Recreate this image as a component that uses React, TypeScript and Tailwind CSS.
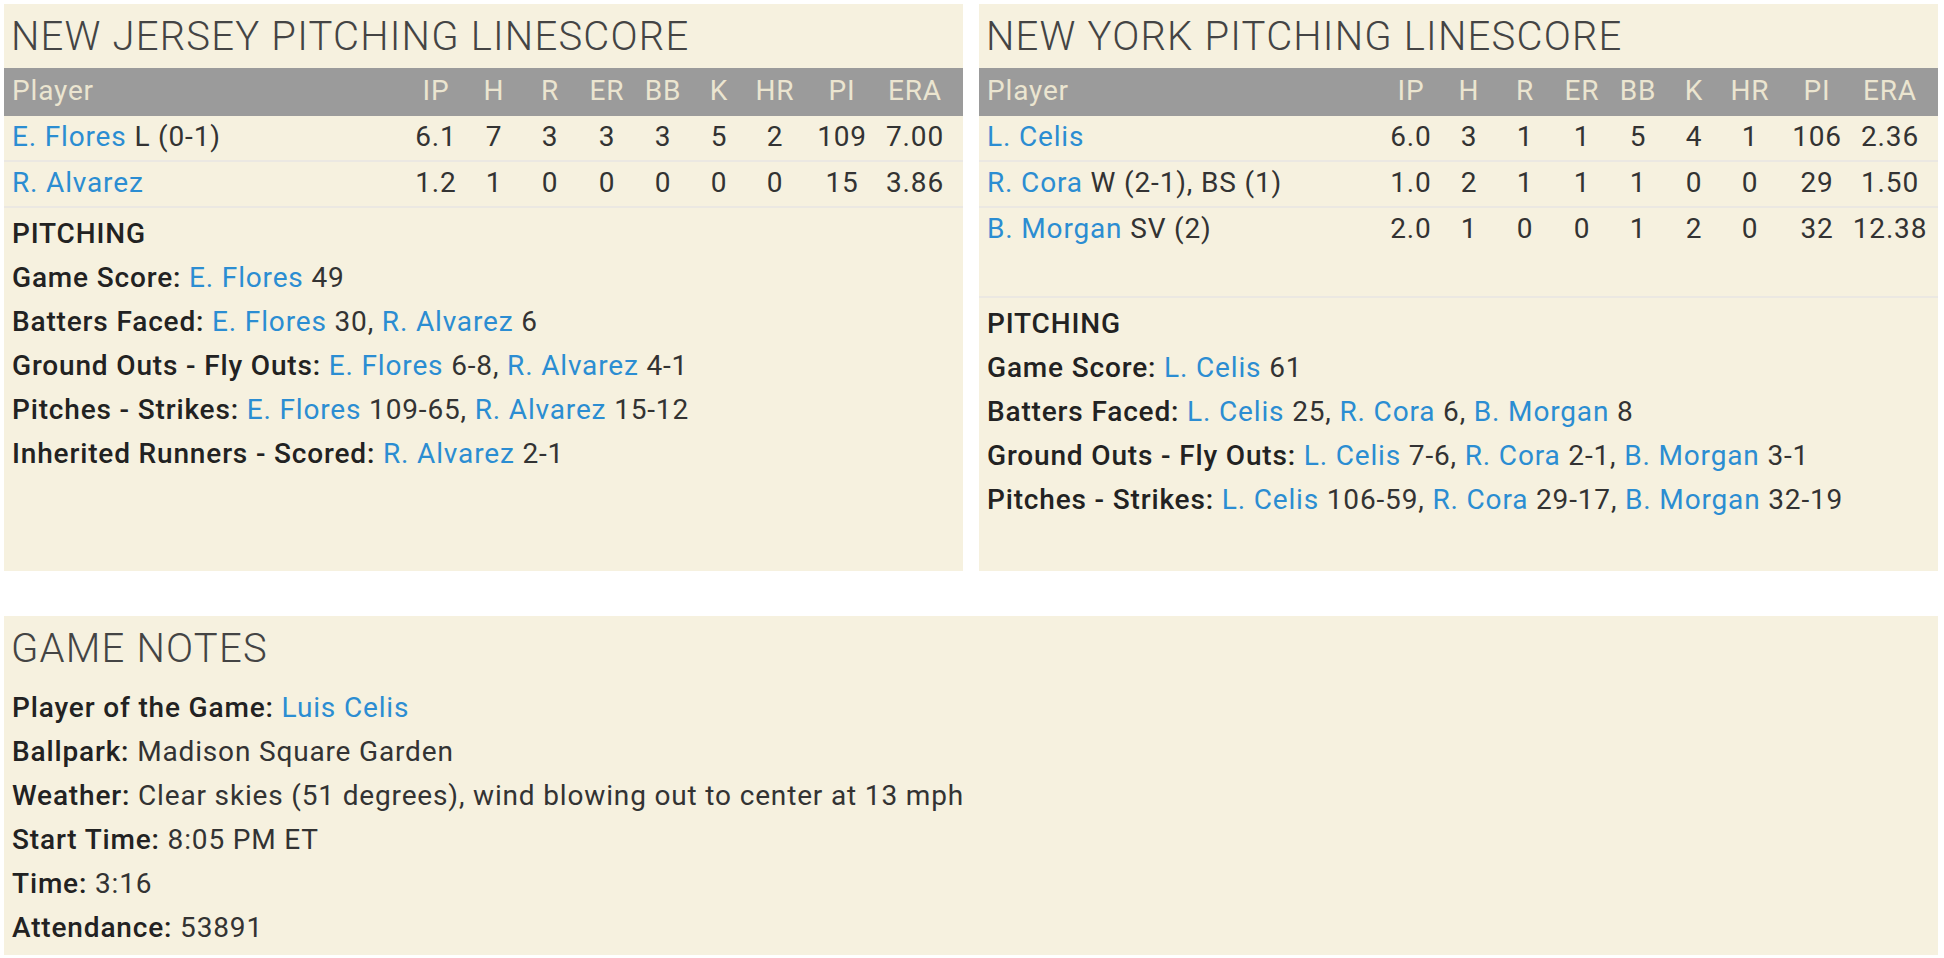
import React from "react";

type Pitcher = {
  name: string;
  note?: string;
  stats: string[];
};

const COLS = ["IP", "H", "R", "ER", "BB", "K", "HR", "PI", "ERA"];

const GRID =
  "grid grid-cols-[1fr_74px_42px_70px_44px_68px_44px_68px_66px_80px] px-[8px]";

const njPitchers: Pitcher[] = [
  { name: "E. Flores", note: "L (0-1)", stats: ["6.1", "7", "3", "3", "3", "5", "2", "109", "7.00"] },
  { name: "R. Alvarez", stats: ["1.2", "1", "0", "0", "0", "0", "0", "15", "3.86"] },
];

const nyPitchers: Pitcher[] = [
  { name: "L. Celis", stats: ["6.0", "3", "1", "1", "5", "4", "1", "106", "2.36"] },
  { name: "R. Cora", note: "W (2-1), BS (1)", stats: ["1.0", "2", "1", "1", "1", "0", "0", "29", "1.50"] },
  { name: "B. Morgan", note: "SV (2)", stats: ["2.0", "1", "0", "0", "1", "2", "0", "32", "12.38"] },
];

// each part: [player, value]
type Entry = [string, string];

const njNotes: { label: string; entries: Entry[] }[] = [
  { label: "Game Score", entries: [["E. Flores", "49"]] },
  { label: "Batters Faced", entries: [["E. Flores", "30"], ["R. Alvarez", "6"]] },
  { label: "Ground Outs - Fly Outs", entries: [["E. Flores", "6-8"], ["R. Alvarez", "4-1"]] },
  { label: "Pitches - Strikes", entries: [["E. Flores", "109-65"], ["R. Alvarez", "15-12"]] },
  { label: "Inherited Runners - Scored", entries: [["R. Alvarez", "2-1"]] },
];

const nyNotes: { label: string; entries: Entry[] }[] = [
  { label: "Game Score", entries: [["L. Celis", "61"]] },
  { label: "Batters Faced", entries: [["L. Celis", "25"], ["R. Cora", "6"], ["B. Morgan", "8"]] },
  { label: "Ground Outs - Fly Outs", entries: [["L. Celis", "7-6"], ["R. Cora", "2-1"], ["B. Morgan", "3-1"]] },
  { label: "Pitches - Strikes", entries: [["L. Celis", "106-59"], ["R. Cora", "29-17"], ["B. Morgan", "32-19"]] },
];

function Link({ children }: { children: React.ReactNode }) {
  return <a className="text-[#2b8dd2] cursor-pointer">{children}</a>;
}

function PanelTitle({ children }: { children: React.ReactNode }) {
  return (
    <h2 className="pt-[2px] px-[7px] text-[40px] leading-[62px] tracking-[0.03em] font-light text-[#444] uppercase whitespace-nowrap">
      {children}
    </h2>
  );
}

function Linescore({
  title,
  pitchers,
  notes,
  spacer,
}: {
  title: string;
  pitchers: Pitcher[];
  notes: { label: string; entries: Entry[] }[];
  spacer?: boolean;
}) {
  return (
    <section className="flex-1 h-[567px] bg-[#f6f1df]">
      <PanelTitle>{title}</PanelTitle>

      <div className={`${GRID} h-[48px] leading-[46px] bg-[#9b9b9b] text-[#ebe5d0] text-[28px] tracking-[0.03em]`}>
        <div>Player</div>
        {COLS.map((c) => (
          <div key={c} className="text-center">
            {c}
          </div>
        ))}
      </div>

      {pitchers.map((p, i) => {
        const last = i === pitchers.length - 1;
        return (
          <div
            key={p.name}
            className={`${GRID} text-[28px] tracking-[0.03em] text-[#333] ${
              last && spacer ? "h-[44px] leading-[42px]" : "leading-[42px] pb-[2px] border-b-2 border-[#ebe8e2]"
            }`}
          >
            <div className="whitespace-nowrap">
              <Link>{p.name}</Link>
              {p.note ? ` ${p.note}` : ""}
            </div>
            {p.stats.map((s, j) => (
              <div key={j} className="text-center whitespace-nowrap">
                {s}
              </div>
            ))}
          </div>
        );
      })}
      {spacer && <div className="h-[46px] border-b-2 border-[#ebe8e2]" />}

      <div className="pt-[4px] px-[8px] text-[28px] tracking-[0.03em] leading-[44px] text-[#333] whitespace-nowrap">
        <div className="font-medium text-[#222]">PITCHING</div>
        {notes.map((n) => (
          <div key={n.label}>
            <span className="font-medium text-[#222]">{n.label}:</span>{" "}
            {n.entries.map(([who, val], k) => (
              <span key={who}>
                <Link>{who}</Link> {val}
                {k < n.entries.length - 1 ? ", " : ""}
              </span>
            ))}
          </div>
        ))}
      </div>
    </section>
  );
}

const gameNotes: { label: string; value: React.ReactNode }[] = [
  { label: "Player of the Game", value: <Link>Luis Celis</Link> },
  { label: "Ballpark", value: "Madison Square Garden" },
  { label: "Weather", value: "Clear skies (51 degrees), wind blowing out to center at 13 mph" },
  { label: "Start Time", value: "8:05 PM ET" },
  { label: "Time", value: "3:16" },
  { label: "Attendance", value: "53891" },
];

export default function App() {
  return (
    <div className="min-h-screen bg-white pt-[4px] pl-[4px] pr-[6px] font-['Roboto',sans-serif]">
      <div className="flex gap-[16px]">
        <Linescore title="New Jersey Pitching Linescore" pitchers={njPitchers} notes={njNotes} />
        <Linescore title="New York Pitching Linescore" pitchers={nyPitchers} notes={nyNotes} spacer />
      </div>

      <section className="mt-[45px] bg-[#f6f1df]">
        <PanelTitle>Game Notes</PanelTitle>
        <div className="pt-[6px] px-[8px] pb-[5px] text-[28px] tracking-[0.03em] leading-[44px] text-[#333]">
          {gameNotes.map((g) => (
            <div key={g.label}>
              <span className="font-medium text-[#222]">{g.label}:</span> {g.value}
            </div>
          ))}
        </div>
      </section>
    </div>
  );
}
